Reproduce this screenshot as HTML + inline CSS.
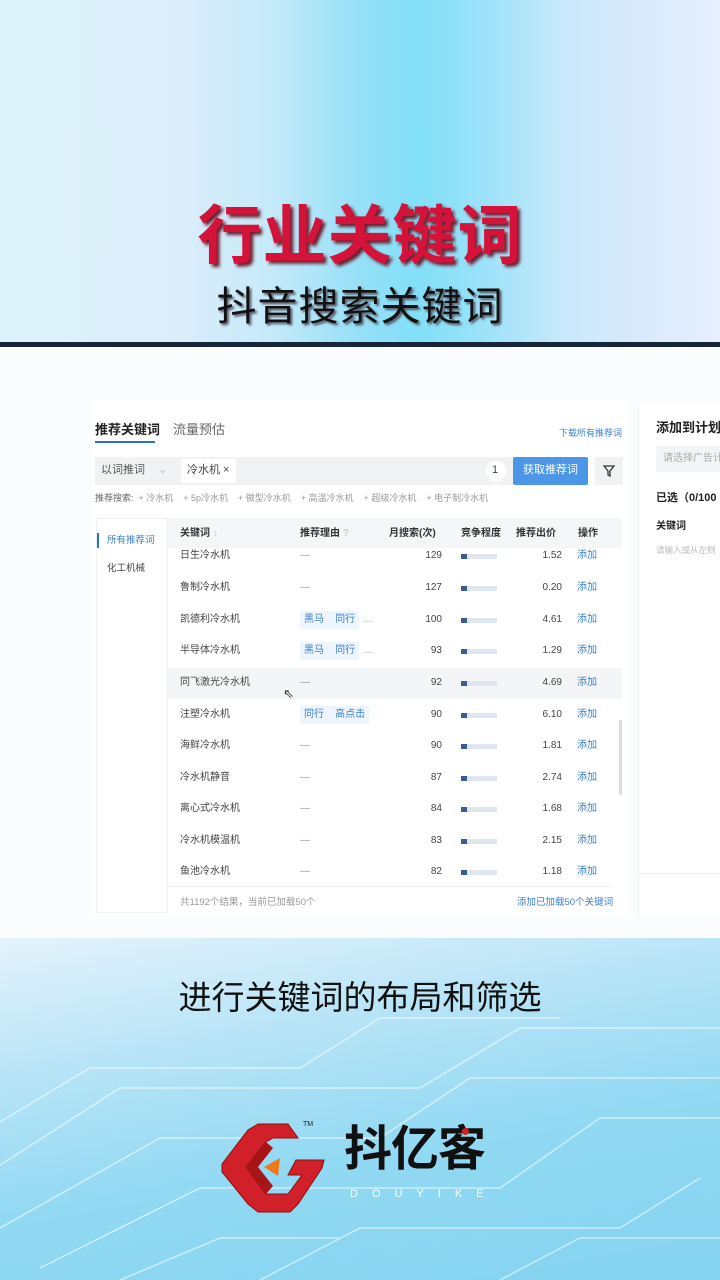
<!DOCTYPE html>
<html><head><meta charset="utf-8"><style>
*{margin:0;padding:0;box-sizing:border-box}
body{width:720px;height:1280px;position:relative;overflow:hidden;font-family:"Liberation Sans","Noto Sans CJK SC",sans-serif;background:#fbfcfd;line-height:1.2}
.a{position:absolute;white-space:nowrap}
#top{position:absolute;left:0;top:0;width:720px;height:343px;background:linear-gradient(90deg,#ddf3fb 0%,#dcedfa 25%,#c4eafa 38%,#95e0f7 50%,#82e0f8 58%,#97e2f9 66%,#c8e8fb 78%,#dbebfb 90%,#e6effd 100%)}
#line{position:absolute;left:0;top:342px;width:720px;height:5px;background:#172638}
#bot{position:absolute;left:0;top:938px;width:720px;height:342px;background:linear-gradient(170deg,#e4f3fb 0%,#b8e4f7 30%,#92d9f3 60%,#84d3f0 100%);overflow:hidden}
.t{font-size:10px;color:#444;line-height:12px}
.g{color:#999;line-height:12px}
.b{color:#3a7fcf;line-height:12px}
.bar{position:absolute;left:461px;width:36px;height:5px;background:#dfe6ef}
.bar:before{content:"";position:absolute;left:0;top:0;width:6px;height:5px;background:#3a5d96}
</style></head><body>
<div id="top"></div>
<div class="a" style="left:0;top:200px;width:720px;text-align:center;font-size:64px;line-height:72px;font-weight:bold;color:#d4123a;letter-spacing:1px;text-shadow:3px 3px 3px #6a2030">行业关键词</div>
<div class="a" style="left:0;top:284px;width:720px;text-align:center;font-size:40px;line-height:46px;color:#111;letter-spacing:1px;text-shadow:2px 2px 2px #556">抖音搜索关键词</div>
<div id="line"></div>

<div style="position:absolute;left:92px;top:400px;width:536px;height:516px;background:#fff"></div>
<div class="a" style="left:95px;top:422px;font-size:13px;color:#222;font-weight:bold">推荐关键词</div>
<div style="position:absolute;left:95px;top:441px;width:60px;height:2px;background:#2f6fc7"></div>
<div class="a" style="left:173px;top:422px;font-size:13px;color:#666">流量预估</div>
<div class="a b" style="left:559px;top:427px;font-size:9px">下载所有推荐词</div>
<div style="position:absolute;left:95px;top:457px;width:418px;height:28px;background:#f1f2f4"></div>
<div class="a" style="left:101px;top:464px;font-size:11px;color:#555">以词推词 <span style="color:#bbb;margin-left:10px">⌄</span></div>
<div style="position:absolute;left:181px;top:459px;width:55px;height:24px;background:#fff"></div>
<div class="a" style="left:187px;top:464px;font-size:11px;color:#444">冷水机 ×</div>
<div style="position:absolute;left:486px;top:461px;width:20px;height:20px;border-radius:10px;background:#fff"></div>
<div class="a" style="left:492px;top:464px;font-size:11px;color:#444">1</div>
<div style="position:absolute;left:513px;top:457px;width:75px;height:28px;background:#4b96e6;border-radius:2px"></div>
<div class="a" style="left:523px;top:464px;font-size:11px;color:#fff">获取推荐词</div>
<div style="position:absolute;left:595px;top:457px;width:28px;height:28px;background:#f1f2f4"></div>
<svg class="a" style="left:603px;top:465px" width="12" height="12" viewBox="0 0 12 12"><path d="M1 1H11L7 6V11L5 10V6Z" fill="none" stroke="#333" stroke-width="1.3"/></svg>
<div class="a" style="left:95px;top:492px;font-size:9px;color:#666">推荐搜索: <span class="g">&nbsp;+ 冷水机 &nbsp;&nbsp; + 5p冷水机 &nbsp;&nbsp; + 微型冷水机 &nbsp;&nbsp; + 高温冷水机 &nbsp;&nbsp; + 超级冷水机 &nbsp;&nbsp; + 电子制冷水机</span></div>

<div style="position:absolute;left:96px;top:518px;width:72px;height:395px;border:1px solid #f0f1f3;background:#fff"></div>
<div style="position:absolute;left:97px;top:533px;width:2px;height:15px;background:#2f6fc7"></div>
<div class="a b" style="left:107px;top:535px;font-size:9.5px">所有推荐词</div>
<div class="a t" style="left:107px;top:563px;font-size:9.5px">化工机械</div>
<div style="position:absolute;left:168px;top:518px;width:454px;height:30px;background:#f5f6f8"></div>
<div class="a t" style="left:180px;top:528px;font-weight:bold;color:#333">关键词 <span style="color:#ccc">↕</span></div>
<div class="a t" style="left:300px;top:528px;font-weight:bold;color:#333">推荐理由 <span style="color:#ccc">?</span></div>
<div class="a t" style="left:389px;top:528px;font-weight:bold;color:#333">月搜索(次)</div>
<div class="a t" style="left:461px;top:528px;font-weight:bold;color:#333">竞争程度</div>
<div class="a t" style="left:516px;top:528px;font-weight:bold;color:#333">推荐出价</div>
<div class="a t" style="left:578px;top:528px;font-weight:bold;color:#333">操作</div>
<div style="position:absolute;left:168px;top:668px;width:454px;height:31px;background:#f4f5f7"></div>
<div style="position:absolute;left:619px;top:720px;width:3px;height:75px;background:#ddd"></div>

<div class="a t" style="left:180px;top:550px">日生冷水机</div><div class="a g" style="left:300px;top:550px;font-size:10px">—</div><div class="a t" style="left:400px;top:550px;width:42px;text-align:right">129</div><div class="bar" style="top:554px"></div><div class="a t" style="left:530px;top:550px;width:32px;text-align:right">1.52</div><div class="a b" style="left:577px;top:550px;font-size:10px">添加</div>
<div class="a t" style="left:180px;top:582px">鲁制冷水机</div><div class="a g" style="left:300px;top:582px;font-size:10px">—</div><div class="a t" style="left:400px;top:582px;width:42px;text-align:right">127</div><div class="bar" style="top:586px"></div><div class="a t" style="left:530px;top:582px;width:32px;text-align:right">0.20</div><div class="a b" style="left:577px;top:582px;font-size:10px">添加</div>
<div class="a t" style="left:180px;top:614px">凯德利冷水机</div><div class="a b" style="left:300px;top:611px;font-size:10px;background:#eef5fd;padding:3px 4px">黑马 &nbsp;&nbsp; 同行</div><div class="a g" style="left:363px;top:614px;font-size:10px">…</div><div class="a t" style="left:400px;top:614px;width:42px;text-align:right">100</div><div class="bar" style="top:618px"></div><div class="a t" style="left:530px;top:614px;width:32px;text-align:right">4.61</div><div class="a b" style="left:577px;top:614px;font-size:10px">添加</div>
<div class="a t" style="left:180px;top:645px">半导体冷水机</div><div class="a b" style="left:300px;top:642px;font-size:10px;background:#eef5fd;padding:3px 4px">黑马 &nbsp;&nbsp; 同行</div><div class="a g" style="left:363px;top:645px;font-size:10px">…</div><div class="a t" style="left:400px;top:645px;width:42px;text-align:right">93</div><div class="bar" style="top:649px"></div><div class="a t" style="left:530px;top:645px;width:32px;text-align:right">1.29</div><div class="a b" style="left:577px;top:645px;font-size:10px">添加</div>
<div class="a t" style="left:180px;top:677px">同飞激光冷水机</div><div class="a g" style="left:300px;top:677px;font-size:10px">—</div><div class="a" style="left:283px;top:686px;font-size:13px;color:#333">⇖</div><div class="a t" style="left:400px;top:677px;width:42px;text-align:right">92</div><div class="bar" style="top:681px"></div><div class="a t" style="left:530px;top:677px;width:32px;text-align:right">4.69</div><div class="a b" style="left:577px;top:677px;font-size:10px">添加</div>
<div class="a t" style="left:180px;top:709px">注塑冷水机</div><div class="a b" style="left:300px;top:706px;font-size:10px;background:#eef5fd;padding:3px 4px">同行 &nbsp;&nbsp; 高点击</div><div class="a t" style="left:400px;top:709px;width:42px;text-align:right">90</div><div class="bar" style="top:713px"></div><div class="a t" style="left:530px;top:709px;width:32px;text-align:right">6.10</div><div class="a b" style="left:577px;top:709px;font-size:10px">添加</div>
<div class="a t" style="left:180px;top:740px">海鲜冷水机</div><div class="a g" style="left:300px;top:740px;font-size:10px">—</div><div class="a t" style="left:400px;top:740px;width:42px;text-align:right">90</div><div class="bar" style="top:744px"></div><div class="a t" style="left:530px;top:740px;width:32px;text-align:right">1.81</div><div class="a b" style="left:577px;top:740px;font-size:10px">添加</div>
<div class="a t" style="left:180px;top:772px">冷水机静音</div><div class="a g" style="left:300px;top:772px;font-size:10px">—</div><div class="a t" style="left:400px;top:772px;width:42px;text-align:right">87</div><div class="bar" style="top:776px"></div><div class="a t" style="left:530px;top:772px;width:32px;text-align:right">2.74</div><div class="a b" style="left:577px;top:772px;font-size:10px">添加</div>
<div class="a t" style="left:180px;top:803px">离心式冷水机</div><div class="a g" style="left:300px;top:803px;font-size:10px">—</div><div class="a t" style="left:400px;top:803px;width:42px;text-align:right">84</div><div class="bar" style="top:807px"></div><div class="a t" style="left:530px;top:803px;width:32px;text-align:right">1.68</div><div class="a b" style="left:577px;top:803px;font-size:10px">添加</div>
<div class="a t" style="left:180px;top:835px">冷水机模温机</div><div class="a g" style="left:300px;top:835px;font-size:10px">—</div><div class="a t" style="left:400px;top:835px;width:42px;text-align:right">83</div><div class="bar" style="top:839px"></div><div class="a t" style="left:530px;top:835px;width:32px;text-align:right">2.15</div><div class="a b" style="left:577px;top:835px;font-size:10px">添加</div>
<div class="a t" style="left:180px;top:866px">鱼池冷水机</div><div class="a g" style="left:300px;top:866px;font-size:10px">—</div><div class="a t" style="left:400px;top:866px;width:42px;text-align:right">82</div><div class="bar" style="top:870px"></div><div class="a t" style="left:530px;top:866px;width:32px;text-align:right">1.18</div><div class="a b" style="left:577px;top:866px;font-size:10px">添加</div>
<div style="position:absolute;left:168px;top:886px;width:442px;height:1px;background:#eee"></div>
<div class="a g" style="left:180px;top:897px;font-size:9.5px">共1192个结果，当前已加载50个</div>
<div class="a b" style="left:517px;top:897px;font-size:9.5px">添加已加载50个关键词</div>

<div style="position:absolute;left:638px;top:406px;width:82px;height:512px;background:#fff;border-left:1px solid #eef0f2"></div>
<div class="a" style="left:656px;top:420px;font-size:13px;color:#222;font-weight:bold">添加到计划</div>
<div style="position:absolute;left:656px;top:446px;width:64px;height:26px;background:#f3f4f6"></div>
<div class="a" style="left:663px;top:453px;font-size:10px;color:#aaa">请选择广告计</div>
<div class="a" style="left:656px;top:492px;font-size:11px;color:#222;font-weight:bold">已选（0/100</div>
<div class="a" style="left:656px;top:521px;font-size:10px;color:#222;font-weight:bold">关键词</div>
<div class="a" style="left:656px;top:545px;font-size:8.5px;color:#bbb">请输入或从左侧</div>
<div style="position:absolute;left:638px;top:873px;width:82px;height:1px;background:#eee"></div>

<div id="bot">
<svg width="720" height="342" style="position:absolute;left:0;top:0" fill="none" stroke="rgba(255,255,255,0.55)" stroke-width="1.5">
<path d="M-20 240 L120 150 L420 150 L520 90 L740 90"/>
<path d="M0 290 L160 200 L380 200 L470 140 L740 140"/>
<path d="M40 330 L200 250 L500 250 L600 180 L740 180"/>
<path d="M260 342 L360 290 L620 290 L700 240"/>
<path d="M500 342 L580 300 L720 300"/>
<path d="M-10 190 L90 130 L300 130 L380 80 L560 80"/>
<path d="M120 342 L220 300 L340 300"/>
</svg>
</div>
<div class="a" style="left:0;top:978px;width:720px;text-align:center;font-size:33px;line-height:40px;color:#111">进行关键词的布局和筛选</div>
<svg class="a" style="left:218px;top:1120px" width="110" height="95" viewBox="0 0 110 95">
<path d="M40 4 L70 4 L80 18 L55 18 L48 22 L28 47 L48 74 L70 74 L84 55 L70 55 L78 40 L106 40 L104 48 L80 84 L72 92 L40 92 L30 84 L4 52 L4 44 L30 10 Z" fill="#d2202a" stroke="#8a1010" stroke-width="1"/>
<path d="M48 22 L28 47 L48 74 L55 66 L40 47 L55 28 Z" fill="#a81518"/>
<path d="M46 47 L62 38 L60 56 Z" fill="#ee7a1a"/>
</svg>
<div class="a" style="left:303px;top:1121px;font-size:7px;color:#222">TM</div>
<div class="a" style="left:344px;top:1121px;font-size:48px;font-weight:bold;color:#111;letter-spacing:-1px">抖亿客</div>
<div style="position:absolute;left:462px;top:1128px;width:7px;height:7px;border-radius:4px;background:#d42020"></div>
<div class="a" style="left:350px;top:1188px;font-size:11px;color:#fff;letter-spacing:14px">DOUYIKE</div>
</body></html>
